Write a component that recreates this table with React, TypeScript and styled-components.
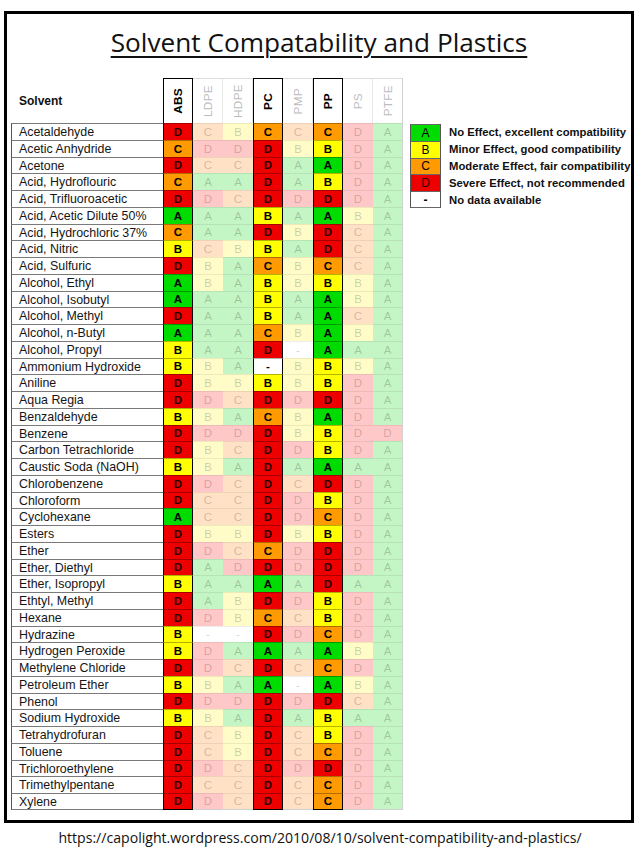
import React from "react";
import styled, { createGlobalStyle, css } from "styled-components";

type Grade = "A" | "B" | "C" | "D" | "-";

const STRONG: Record<Grade, string> = {
  A: "#00dc00",
  B: "#ffff00",
  C: "#ff9a00",
  D: "#ee0000",
  "-": "#ffffff",
};

const FADED: Record<Grade, string> = {
  A: "#c4f5c4",
  B: "#fffcc8",
  C: "#ffe2c6",
  D: "#ffc8c8",
  "-": "#ffffff",
};

const PLASTICS: { name: string; strong: boolean }[] = [
  { name: "ABS", strong: true },
  { name: "LDPE", strong: false },
  { name: "HDPE", strong: false },
  { name: "PC", strong: true },
  { name: "PMP", strong: false },
  { name: "PP", strong: true },
  { name: "PS", strong: false },
  { name: "PTFE", strong: false },
];

const ROWS: [string, string][] = [
  ["Acetaldehyde", "DCBCCCDA"],
  ["Acetic Anhydride", "CDDDBBDA"],
  ["Acetone", "DCCDAADA"],
  ["Acid, Hydroflouric", "CAADABDA"],
  ["Acid, Trifluoroacetic", "DDCDDDDA"],
  ["Acid, Acetic Dilute 50%", "AAABAABA"],
  ["Acid, Hydrochloric 37%", "CAADBDCA"],
  ["Acid, Nitric", "BCBBADCA"],
  ["Acid, Sulfuric", "DBACBCCA"],
  ["Alcohol, Ethyl", "ABABBBBA"],
  ["Alcohol, Isobutyl", "AAABAABA"],
  ["Alcohol, Methyl", "DAABAACA"],
  ["Alcohol, n-Butyl", "AAACBABA"],
  ["Alcohol, Propyl", "BAAD-AAA"],
  ["Ammonium Hydroxide", "BBA-BBBA"],
  ["Aniline", "DBBBBBDA"],
  ["Aqua Regia", "DDCDDDDA"],
  ["Benzaldehyde", "BBACBADA"],
  ["Benzene", "DDDDBBDD"],
  ["Carbon Tetrachloride", "DBCDDBDA"],
  ["Caustic Soda (NaOH)", "BBADAAAA"],
  ["Chlorobenzene", "DDCDCDDA"],
  ["Chloroform", "DCCDDBDA"],
  ["Cyclohexane", "ACCDDCDA"],
  ["Esters", "DBBDBBDA"],
  ["Ether", "DDCCDDDA"],
  ["Ether, Diethyl", "DADDDDDA"],
  ["Ether, Isopropyl", "BAAAADAA"],
  ["Ethtyl, Methyl", "DABDDBDA"],
  ["Hexane", "DDBCCBDA"],
  ["Hydrazine", "B--DDCDA"],
  ["Hydrogen Peroxide", "BDAAAABA"],
  ["Methylene Chloride", "DDCDCCDA"],
  ["Petroleum Ether", "BBAA-ABA"],
  ["Phenol", "DDDDDDCA"],
  ["Sodium Hydroxide", "BBADABAA"],
  ["Tetrahydrofuran", "DCBDCBDA"],
  ["Toluene", "DCBDCCDA"],
  ["Trichloroethylene", "DDCDDDDA"],
  ["Trimethylpentane", "DCCDCCDA"],
  ["Xylene", "DDCDCCDA"],
];

const LEGEND: [Grade, string][] = [
  ["A", "No Effect, excellent compatibility"],
  ["B", "Minor Effect, good compatibility"],
  ["C", "Moderate Effect, fair compatibility"],
  ["D", "Severe Effect, not recommended"],
  ["-", "No data available"],
];

const ROW_H = 16.75;

const GlobalStyle = createGlobalStyle`
  html, body {
    margin: 0;
    padding: 0;
    background: #ffffff;
  }
  body {
    font-family: "Liberation Sans", Arial, sans-serif;
    color: #111;
  }
`;

const Page = styled.div`
  width: 640px;
  height: 852px;
  overflow: hidden;
`;

const Frame = styled.div`
  margin: 11px 0 0 4px;
  width: 630px;
  height: 812px;
  box-sizing: border-box;
  border: 3px solid #000;
  display: flex;
  flex-direction: column;
`;

const Title = styled.h1`
  margin: 0;
  height: 64px;
  line-height: 56px;
  text-align: center;
  font-family: "Open Sans", "Noto Sans", sans-serif;
  font-weight: 400;
  font-size: 26.2px;
  color: #111;
  text-decoration: underline;
  text-decoration-thickness: 2px;
  text-underline-offset: 4px;
`;

const Main = styled.div`
  display: flex;
  align-items: flex-start;
  padding-left: 4px;
  gap: 7px;
`;

const Table = styled.div`
  display: flex;
  flex-direction: column;
  width: 392px;
`;

const gridCols = css`
  display: grid;
  grid-template-columns: 152px repeat(8, 30px);
`;

const HeaderRow = styled.div`
  ${gridCols};
  height: 45px;
`;

const SolventHead = styled.div`
  display: flex;
  align-items: center;
  padding-left: 8px;
  font-weight: bold;
  font-size: 12px;
  color: #111;
`;

const PlasticHead = styled.div<{ $strong: boolean; $last: boolean }>`
  box-sizing: border-box;
  display: flex;
  align-items: center;
  justify-content: center;
  ${(p) =>
    p.$strong
      ? css`
          border: 1px solid #000;
          border-bottom: none;
          color: #000;
          font-weight: bold;
        `
      : css`
          border-top: 1px solid #dcdcdc;
          border-right: 1px solid ${p.$last ? "#d0d0d0" : "#e6e6e6"};
          color: #bcbcbc;
          font-weight: normal;
        `}
`;

const VerticalLabel = styled.span`
  writing-mode: vertical-rl;
  transform: rotate(180deg);
  font-size: 11.8px;
  letter-spacing: 0.3px;
`;

const Row = styled.div`
  ${gridCols};
  height: ${ROW_H}px;
`;

const NameCell = styled.div<{ $last: boolean }>`
  box-sizing: border-box;
  border-top: 1px solid #7a7a7a;
  border-left: 1px solid #555;
  ${(p) => p.$last && css`border-bottom: 1px solid #7a7a7a;`}
  padding-left: 7px;
  font-size: 12.4px;
  line-height: 16px;
  white-space: nowrap;
  color: #151515;
  overflow: hidden;
`;

const GradeCell = styled.div<{
  $grade: Grade;
  $strong: boolean;
  $last: boolean;
  $edge: boolean;
}>`
  box-sizing: border-box;
  display: flex;
  align-items: center;
  justify-content: center;
  font-size: 11.5px;
  ${(p) =>
    p.$strong
      ? css`
          background: ${STRONG[p.$grade]};
          color: ${p.$grade === "D" ? "#2a0000" : "#000"};
          font-weight: bold;
          border-left: 1px solid #000;
          border-right: 1px solid #000;
          border-top: 1px solid rgba(0, 0, 0, 0.3);
          ${p.$last && css`border-bottom: 1px solid #000;`}
        `
      : css`
          background: ${FADED[p.$grade]};
          color: rgba(0, 0, 0, 0.2);
          font-weight: normal;
          border-top: 1px solid rgba(0, 0, 0, 0.07);
          ${p.$edge && css`border-right: 1px solid #d0d0d0;`}
          ${p.$last && css`border-bottom: 1px solid #d0d0d0;`}
        `}
`;

const Legend = styled.div`
  margin-top: 46px;
  display: flex;
  flex-direction: column;
`;

const LegendRow = styled.div`
  display: flex;
  align-items: stretch;
  height: 16.8px;
  gap: 8px;
`;

const Swatch = styled.div<{ $grade: Grade; $last: boolean }>`
  box-sizing: border-box;
  width: 31px;
  display: flex;
  align-items: center;
  justify-content: center;
  background: ${(p) => STRONG[p.$grade]};
  border-left: 1px solid #555;
  border-right: 1px solid #555;
  border-top: 1px solid #666;
  ${(p) => p.$last && css`border-bottom: 1px solid #666;`}
  font-size: 12px;
  font-weight: ${(p) => (p.$grade === "-" ? "bold" : "normal")};
  color: ${(p) => (p.$grade === "D" ? "#3a0000" : "#000")};
`;

const LegendLabel = styled.div`
  display: flex;
  align-items: center;
  font-weight: bold;
  font-size: 11.3px;
  color: #111;
  white-space: nowrap;
`;

const Footer = styled.div`
  margin-top: 5px;
  text-align: center;
  font-family: "Open Sans", "Noto Sans", sans-serif;
  font-size: 14.1px;
  line-height: 20px;
  color: #111;
`;

export default function App() {
  return (
    <Page>
      <GlobalStyle />
      <Frame>
        <Title>Solvent Compatability and Plastics</Title>
        <Main>
          <Table>
            <HeaderRow>
              <SolventHead>Solvent</SolventHead>
              {PLASTICS.map((pl, i) => (
                <PlasticHead
                  key={pl.name}
                  $strong={pl.strong}
                  $last={i === PLASTICS.length - 1}
                >
                  <VerticalLabel>{pl.name}</VerticalLabel>
                </PlasticHead>
              ))}
            </HeaderRow>
            {ROWS.map(([name, grades], r) => {
              const last = r === ROWS.length - 1;
              return (
                <Row key={name}>
                  <NameCell $last={last}>{name}</NameCell>
                  {grades.split("").map((g, c) => (
                    <GradeCell
                      key={c}
                      $grade={g as Grade}
                      $strong={PLASTICS[c].strong}
                      $last={last}
                      $edge={c === PLASTICS.length - 1}
                    >
                      {g}
                    </GradeCell>
                  ))}
                </Row>
              );
            })}
          </Table>
          <Legend>
            {LEGEND.map(([g, label], i) => (
              <LegendRow key={g}>
                <Swatch $grade={g} $last={i === LEGEND.length - 1}>
                  {g}
                </Swatch>
                <LegendLabel>{label}</LegendLabel>
              </LegendRow>
            ))}
          </Legend>
        </Main>
      </Frame>
      <Footer>https://capolight.wordpress.com/2010/08/10/solvent-compatibility-and-plastics/</Footer>
    </Page>
  );
}
